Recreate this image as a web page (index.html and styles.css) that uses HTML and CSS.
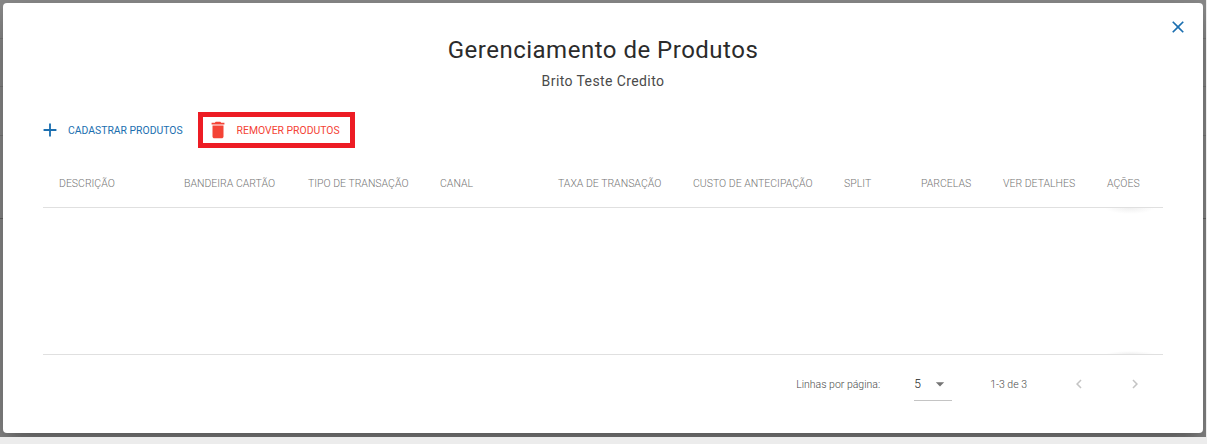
FILE: index.html
```html
<!DOCTYPE html>
<html lang="en">
<head>
    <meta charset="UTF-8">
    <meta name="viewport" content="width=device-width, initial-scale=1.0">
    <title>Gerenciamento de Produtos</title>
    <link rel="stylesheet" href="styles.css">
</head>
<body>
    <div class="backdrop">
        <div class="modal">
            <button class="close-btn" aria-label="Fechar">
                <svg width="20" height="20" viewBox="0 0 24 24"><path d="M19 6.41 17.59 5 12 10.59 6.41 5 5 6.41 10.59 12 5 17.59 6.41 19 12 13.41 17.59 19 19 17.59 13.41 12z"/></svg>
            </button>

            <h1 class="title">Gerenciamento de Produtos</h1>
            <p class="subtitle">Brito Teste Credito</p>

            <div class="actions">
                <button class="action add">
                    <svg width="22" height="22" viewBox="0 0 24 24"><path d="M19 13h-6v6h-2v-6H5v-2h6V5h2v6h6v2z"/></svg>
                    <span>Cadastrar Produtos</span>
                </button>
                <button class="action remove">
                    <svg width="22" height="22" viewBox="0 0 24 24"><path d="M6 19c0 1.1.9 2 2 2h8c1.1 0 2-.9 2-2V7H6v12zM19 4h-3.5l-1-1h-5l-1 1H5v2h14V4z"/></svg>
                    <span>Remover Produtos</span>
                </button>
            </div>

            <div class="table-head">
                <span>Descrição</span>
                <span>Bandeira Cartão</span>
                <span>Tipo de Transação</span>
                <span>Canal</span>
                <span>Taxa de Transação</span>
                <span>Custo de Antecipação</span>
                <span>Split</span>
                <span>Parcelas</span>
                <span>Ver Detalhes</span>
                <span>Ações</span>
            </div>
            <div class="table-body">
                <div class="scroll-shadow top"></div>
                <div class="scroll-shadow bottom"></div>
            </div>

            <div class="pagination">
                <span class="rows-label">Linhas por página:</span>
                <div class="rows-select">
                    <span>5</span>
                    <svg width="20" height="20" viewBox="0 0 24 24"><path d="M7 10l5 5 5-5z"/></svg>
                </div>
                <span class="range">1-3 de 3</span>
                <button class="page-btn" aria-label="Anterior">
                    <svg width="24" height="24" viewBox="0 0 24 24"><path d="M15.41 7.41 14 6l-6 6 6 6 1.41-1.41L10.83 12z"/></svg>
                </button>
                <button class="page-btn" aria-label="Próxima">
                    <svg width="24" height="24" viewBox="0 0 24 24"><path d="M10 6 8.59 7.41 13.17 12l-4.58 4.59L10 18l6-6z"/></svg>
                </button>
            </div>
        </div>
    </div>
</body>
</html>
```

FILE: styles.css
```css
body {
    margin: 0;
    height: 444px;
    overflow: hidden;
    font-family: Roboto, "Liberation Sans", sans-serif;
    background-color: #ececec;
}

button {
    background: none;
    border: none;
    padding: 0;
    font-family: inherit;
    cursor: pointer;
}

/* grey overlay, the row lines of the page behind still show at the edges */
.backdrop {
    width: 1206px;
    height: 437px;
    padding-top: 3px;
    box-sizing: border-box;
    overflow: hidden;
    background: linear-gradient(#8c8c8c 38px, #7c7c7c 38px, #7c7c7c 39px, #8c8c8c 39px, #8c8c8c 86px, #7c7c7c 86px, #7c7c7c 87px, #8c8c8c 87px, #8c8c8c 135px, #7c7c7c 135px, #7c7c7c 136px, #8c8c8c 136px, #8c8c8c 218px, #666 218px, #666 219px, #8c8c8c 219px);
}

.modal {
    position: relative;
    box-sizing: border-box;
    width: 1200px;
    height: 430px;
    margin-left: 3px;
    padding: 30px 40px 0;
    background-color: #fff;
    border-radius: 4px;
    box-shadow: 0 11px 15px -7px rgba(0,0,0,0.2), 0 24px 38px 3px rgba(0,0,0,0.14), 0 9px 46px 8px rgba(0,0,0,0.12);
}

.close-btn {
    position: absolute;
    top: 14px;
    right: 15px;
    height: 20px;
    fill: #1b6fb0;
}

.title {
    margin: 0;
    font-size: 24px;
    font-weight: 400;
    line-height: 34px;
    letter-spacing: 0.5px;
    text-align: center;
    color: #2b2b2b;
}

.subtitle {
    margin: 4px 0 0;
    font-size: 14px;
    font-weight: 400;
    line-height: 20px;
    letter-spacing: 0.4px;
    text-align: center;
    color: #4a4a4a;
}

.actions {
    display: flex;
    align-items: center;
    gap: 15px;
    margin-top: 21px;
}

.action {
    display: flex;
    align-items: center;
    font-size: 10.4px;
    text-transform: uppercase;
}

.action.add {
    color: #1b6fb0;
    fill: #1b6fb0;
    gap: 7px;
    margin-left: -4px;
}

.action.remove {
    color: #f44336;
    fill: #f44336;
    gap: 8px;
    box-sizing: border-box;
    height: 36px;
    padding: 0 10px 0 4px;
    border: 5px solid #ed1c24;
}

.table-head {
    display: grid;
    grid-template-columns: 125px 124px 132px 118px 135px 151px 77px 82px 104px 72px;
    align-items: center;
    height: 48px;
    margin-top: 11px;
    border-bottom: 1px solid #e0e0e0;
    font-size: 10.5px;
    font-weight: 300;
    text-transform: uppercase;
    color: #757575;
}

.table-head span {
    padding-left: 16px;
}

.table-body {
    position: relative;
    height: 146px;
    border-bottom: 1px solid #e0e0e0;
}

.scroll-shadow {
    position: absolute;
    right: 8px;
    width: 50px;
    height: 6px;
}

.scroll-shadow.top {
    top: 0;
    background: radial-gradient(ellipse at 50% 0, #f0f0f0, transparent 70%);
}

.scroll-shadow.bottom {
    bottom: 0;
    height: 3px;
    background: radial-gradient(ellipse at 50% 100%, #f0f0f0, transparent 70%);
}

.pagination {
    display: flex;
    align-items: center;
    justify-content: flex-end;
    height: 58px;
    font-size: 10.5px;
    font-weight: 300;
    color: #4a4a4a;
}

.rows-label {
    margin-right: 34px;
}

.rows-select {
    display: flex;
    align-items: center;
    justify-content: space-between;
    box-sizing: border-box;
    width: 38px;
    height: 32px;
    margin-top: 2px;
    padding: 0 2px 1px 0;
    border-bottom: 1px solid #c4c4c4;
    font-size: 12px;
    font-weight: 300;
    color: #212121;
    fill: #757575;
}

.range {
    margin-left: 38px;
    margin-right: 24px;
}

.page-btn {
    display: flex;
    align-items: center;
    justify-content: center;
    width: 56px;
    height: 24px;
    fill: #c4c4c4;
}

.page-btn svg {
    width: 18px;
    height: 18px;
}
```
